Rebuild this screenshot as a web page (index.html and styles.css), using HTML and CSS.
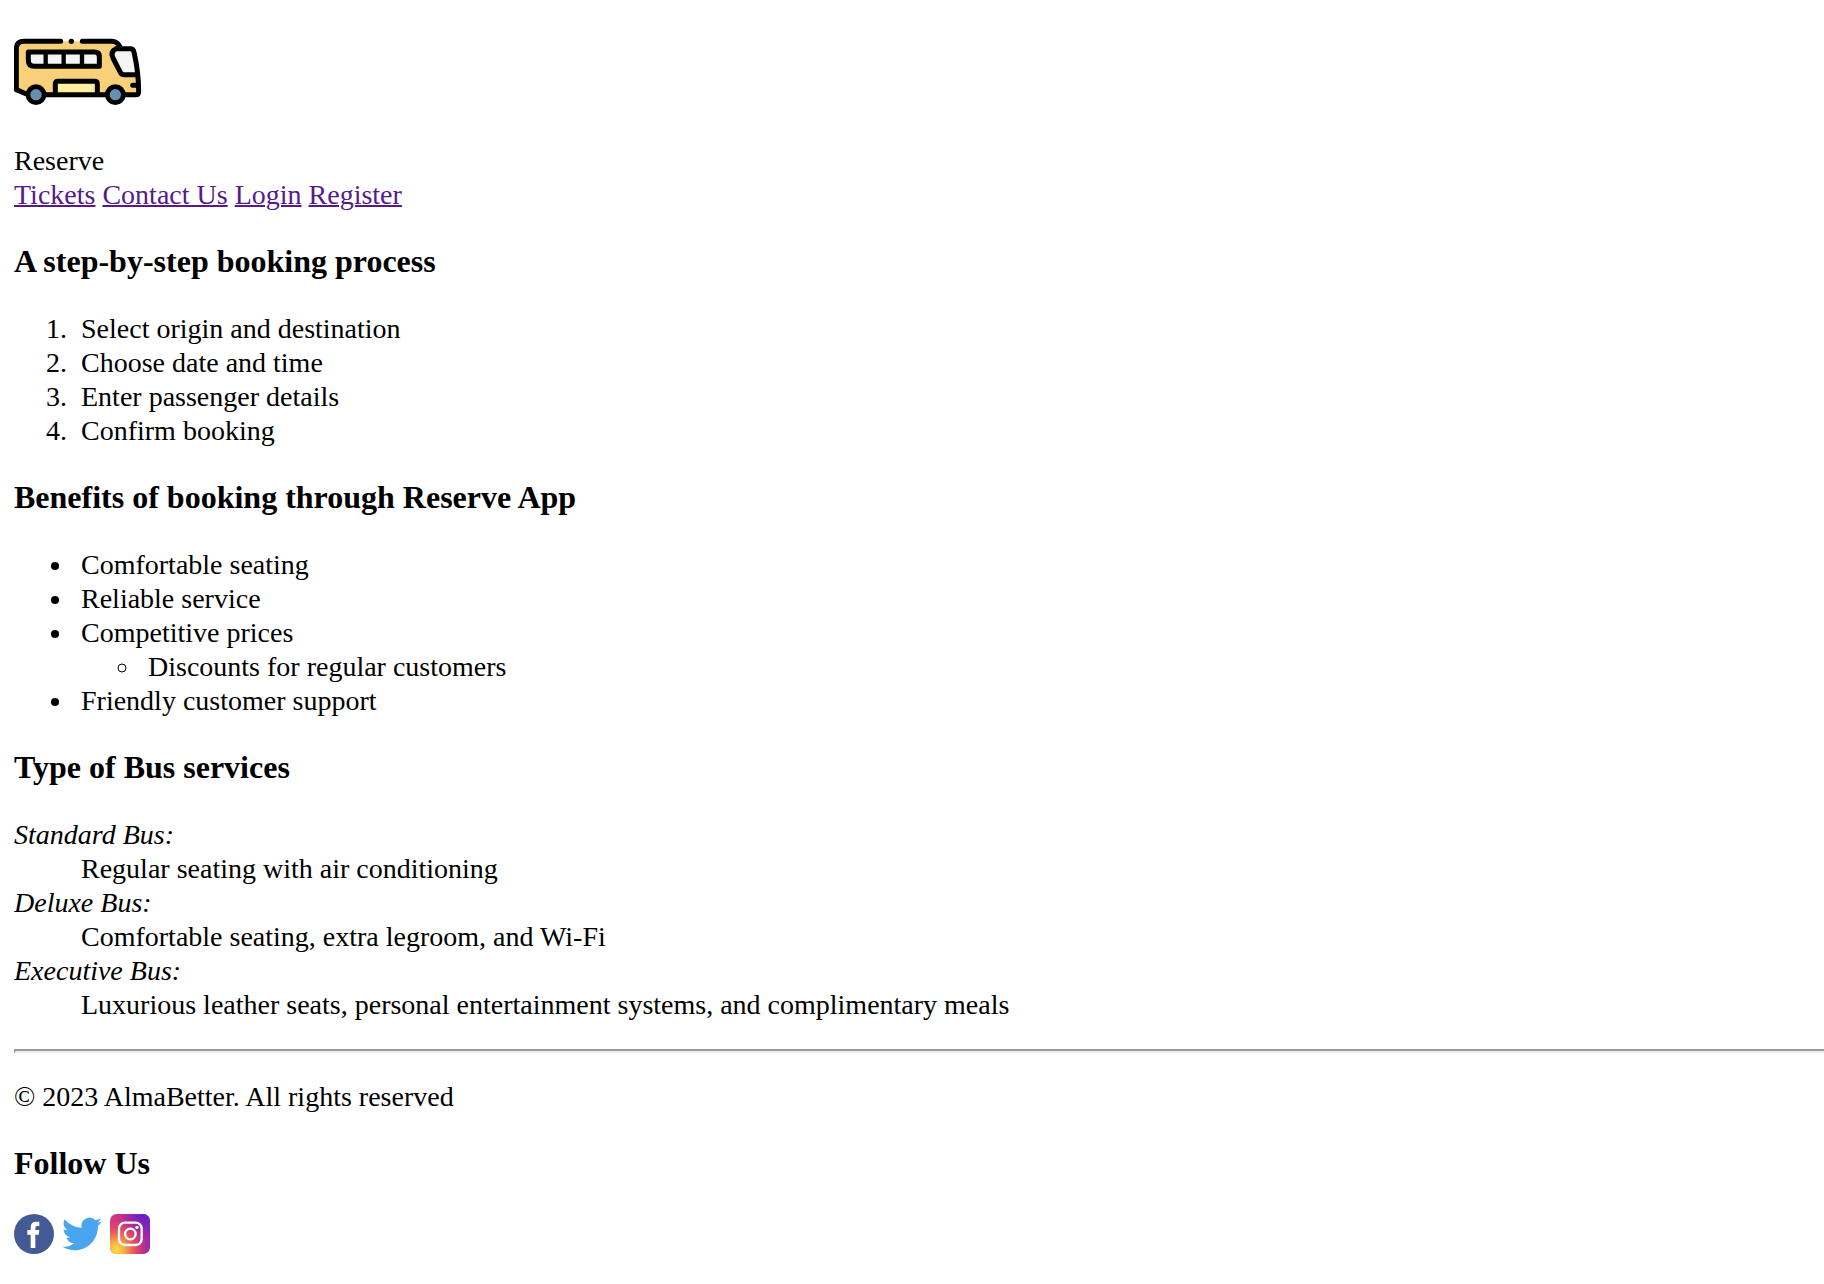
FILE: index.html
```html
<!DOCTYPE html>
<html lang="en">
<head>
  <meta charset="utf-8">
  <meta name="viewport" content="width=device-width, initial-scale=1">
  <title>Reserve</title>
  <link rel="stylesheet" href="styles.css">
</head>
<body>
  <header>
    <svg class="logo" viewBox="42 -18 384 390" role="img" aria-label="Bus">
      <path fill="#f8d07a" d="M48 64h298l16 18h40l16 86v54H76l-28-12z"/>
      <path fill="#f5f5f5" d="M84 96h200q14 0 14 14v29H102q-18 0-18-18z"/>
      <path fill="#f5f5f5" d="M348 86h48q5 0 6 8l9 69h-44q-7 0-10-7l-21-42q-10-20 12-28z"/>
      <path fill="#feefa3" d="M166 184h126v40H166z"/>
      <g fill="none" stroke="#000" stroke-width="15" stroke-linecap="round" stroke-linejoin="round">
        <path d="M182 64H72q-23 0-23 23v122l30 13"/>
        <path d="M247 64h89q15 0 24 16"/>
        <path d="M348 86h42q10 0 12 10q14 62 14 119q0 9-9 9h-32M409 164h-38q-7 0-10-7l-22-43q-9-19 9-28M138 224h178M398 196h16"/>
        <path d="M85 96h199q14 0 14 14v29H103q-18 0-18-18z"/>
        <path stroke-width="13" d="M137 98v40M191 98v40M246 98v40"/>
        <path d="M166 222v-30q0-8 8-8h110q8 0 8 8v30"/>
      </g>
      <circle cx="214" cy="64" r="8"/>
      <g fill="#6790ae" stroke="#000" stroke-width="14">
        <circle cx="108" cy="224" r="24"/>
        <circle cx="346" cy="224" r="24"/>
      </g>
    </svg>
    <div>Reserve</div>
    <nav>
      <a href="#">Tickets</a>
      <a href="#">Contact Us</a>
      <a href="#">Login</a>
      <a href="#">Register</a>
    </nav>
  </header>
  <main>
    <h3>A step-by-step booking process</h3>
    <ol>
      <li>Select origin and destination</li>
      <li>Choose date and time</li>
      <li>Enter passenger details</li>
      <li>Confirm booking</li>
    </ol>
    <h3>Benefits of booking through Reserve App</h3>
    <ul>
      <li>Comfortable seating</li>
      <li>Reliable service</li>
      <li>Competitive prices
        <ul>
          <li>Discounts for regular customers</li>
        </ul>
      </li>
      <li>Friendly customer support</li>
    </ul>
    <h3>Type of Bus services</h3>
    <dl>
      <dt>Standard Bus:</dt>
      <dd>Regular seating with air conditioning</dd>
      <dt>Deluxe Bus:</dt>
      <dd>Comfortable seating, extra legroom, and Wi-Fi</dd>
      <dt>Executive Bus:</dt>
      <dd>Luxurious leather seats, personal entertainment systems, and complimentary meals</dd>
    </dl>
  </main>
  <hr>
  <footer>
    <p>© 2023 AlmaBetter. All rights reserved</p>
    <h3>Follow Us</h3>
    <div class="social">
      <a href="#" aria-label="Facebook">
        <svg viewBox="0 0 120 120">
          <circle cx="60" cy="60" r="60" fill="#435a95"/>
          <path fill="#fff" d="M50 102V62H40V48h10V40q0-17 16-17h10v13h-6q-6 0-6 6v6h12l-2 14H64v40z"/>
        </svg>
      </a>
      <a href="#" aria-label="Twitter">
        <svg viewBox="0 0 24 24">
          <path fill="#4aa5f0" d="M23.95 4.57a10 10 0 0 1-2.82.77 4.96 4.96 0 0 0 2.16-2.72c-.95.55-2 .95-3.13 1.18a4.92 4.92 0 0 0-8.38 4.48C7.69 8.1 4.07 6.13 1.64 3.16a4.9 4.9 0 0 0 1.52 6.57 4.9 4.9 0 0 1-2.23-.61v.06a4.92 4.92 0 0 0 3.95 4.83 5 5 0 0 1-2.21.08 4.94 4.94 0 0 0 4.6 3.42A9.87 9.87 0 0 1 0 19.54a13.99 13.99 0 0 0 7.55 2.21c9.05 0 14-7.5 14-13.98 0-.21 0-.42-.02-.63a9.94 9.94 0 0 0 2.42-2.57z"/>
        </svg>
      </a>
      <a href="#" aria-label="Instagram">
        <svg viewBox="0 0 120 120">
          <defs>
            <linearGradient id="insta-base" x1="0" y1="0" x2="1" y2="0">
              <stop offset="0" stop-color="#d03a80"/>
              <stop offset=".5" stop-color="#c52b91"/>
              <stop offset="1" stop-color="#9a2aa8"/>
            </linearGradient>
            <radialGradient id="insta-violet" cx=".85" cy="0" r=".6">
              <stop offset="0" stop-color="#6420c8"/>
              <stop offset="1" stop-color="#6420c8" stop-opacity="0"/>
            </radialGradient>
            <radialGradient id="insta-glow" cx=".15" cy=".9" r=".8">
              <stop offset="0" stop-color="#ffdf3d"/>
              <stop offset=".25" stop-color="#fbb044"/>
              <stop offset=".6" stop-color="#ee5b50" stop-opacity=".8"/>
              <stop offset="1" stop-color="#e0406b" stop-opacity="0"/>
            </radialGradient>
          </defs>
          <rect width="120" height="120" rx="20" fill="url(#insta-base)"/>
          <rect width="120" height="120" rx="20" fill="url(#insta-violet)"/>
          <rect width="120" height="120" rx="20" fill="url(#insta-glow)"/>
          <g fill="none" stroke="#fff" stroke-width="7">
            <rect x="27" y="26" width="68" height="67" rx="18"/>
            <circle cx="61" cy="60" r="16"/>
          </g>
          <circle cx="81" cy="40" r="5" fill="#fff"/>
        </svg>
      </a>
    </div>
  </footer>
</body>
</html>
```
FILE: styles.css
```css
body {
  margin: 14px 0 14px 14px;
  background: #fff;
  color: #000;
  font-family: "Liberation Serif", "Times New Roman", serif;
  font-size: 28px;
  line-height: 34px;
}

.logo {
  display: block;
  width: 128px;
  height: 130px;
}

nav a {
  color: #551a8b;
  text-decoration-thickness: 2px;
}

h3 {
  margin: 31px 0 33px;
  font-size: 32px;
  line-height: 36px;
}

ol,
ul {
  margin: 0;
  padding-left: 60px;
}

li {
  padding-left: 7px;
}

dl {
  margin: 0;
}

dt {
  font-style: italic;
}

dd {
  margin-left: 67px;
}

hr {
  margin: 27px 0;
  border: 2px solid;
  border-color: #9a9a9a #eee #eee #9a9a9a;
  border-right: 0;
}

p {
  margin: 0;
}

.social {
  display: flex;
  gap: 8px;
}

.social svg {
  display: block;
  width: 40px;
  height: 40px;
}
```
